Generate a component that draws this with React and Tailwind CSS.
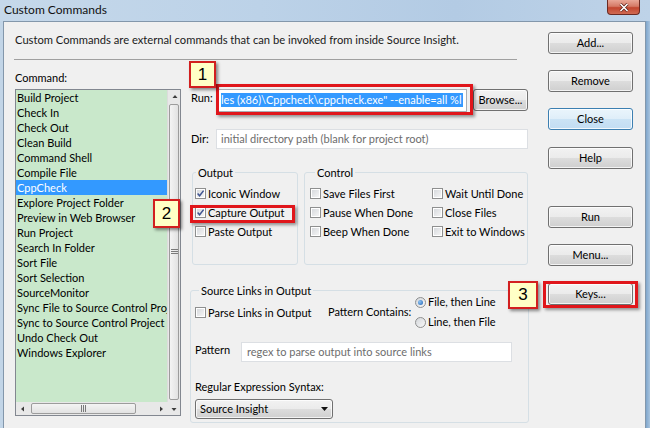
import React from "react";

const BTN =
  "flex items-center justify-center w-[85px] h-[22px] rounded-[3px] border border-[#707070] bg-[linear-gradient(#f2f2f2,#ebebeb_50%,#dddddd_50%,#cfcfcf)] shadow-[inset_0_0_0_1px_rgba(255,255,255,0.75)] text-[11px] text-black";
const BTN_FOCUS =
  "flex items-center justify-center w-[85px] h-[22px] rounded-[3px] border border-[#3c7fb1] bg-[linear-gradient(#eaf5fc,#dfeef9_50%,#cbe3f5_50%,#c2ddf3)] shadow-[inset_0_0_0_1px_rgba(255,255,255,0.8)] text-[11px] text-black";

function Check({ checked }) {
  return (
    <span className="flex items-center justify-center w-[11px] h-[11px] shrink-0 border border-[#8e8f8f] bg-[linear-gradient(135deg,#d3d6da,#f8f8f8)] shadow-[inset_0_0_0_1px_#ffffff]">
      {checked && (
        <svg width="9" height="9" viewBox="0 0 9 9">
          <path d="M1.6 4.6 L3.6 6.8 L7.6 1.6" fill="none" stroke="#3f5490" strokeWidth="1.5" />
        </svg>
      )}
    </span>
  );
}

function CheckRow({ label, checked }) {
  return (
    <div className="flex items-center gap-[2px] h-[19px] whitespace-nowrap">
      <Check checked={checked} />
      <span className="leading-[15px]">{label}</span>
    </div>
  );
}

function Radio({ on }) {
  return (
    <span className="flex items-center justify-center w-[11px] h-[11px] shrink-0 rounded-full border border-[#8e8f8f] bg-[linear-gradient(135deg,#d3d6da,#f8f8f8)]">
      {on && <span className="w-[5px] h-[5px] rounded-full bg-[radial-gradient(circle_at_35%_35%,#8fc4f2,#1f62b4)]" />}
    </span>
  );
}

const ITEMS = [
  "Build Project",
  "Check In",
  "Check Out",
  "Clean Build",
  "Command Shell",
  "Compile File",
  "CppCheck",
  "Explore Project Folder",
  "Preview in Web Browser",
  "Run Project",
  "Search In Folder",
  "Sort File",
  "Sort Selection",
  "SourceMonitor",
  "Sync File to Source Control Project",
  "Sync to Source Control Project",
  "Undo Check Out",
  "Windows Explorer",
];

function Arrow({ dir }) {
  const paths = {
    up: "M1.5 5 L4 2 L6.5 5 Z",
    down: "M1.5 3 L4 6 L6.5 3 Z",
    left: "M5 1.5 L2 4 L5 6.5 Z",
    right: "M3 1.5 L6 4 L3 6.5 Z",
  };
  return (
    <span className="flex items-center justify-center w-[13px] h-[13px] shrink-0">
      <svg width="8" height="8" viewBox="0 0 8 8">
        <path d={paths[dir]} fill="#3c3c3c" />
      </svg>
    </span>
  );
}

function ListBox() {
  return (
    <div className="mt-[4px] h-[327px] border border-[#828790] bg-[#c9e8cb] flex flex-col">
      <div className="flex flex-1 min-h-0">
        <div className="flex-1 min-w-0 overflow-hidden">
          {ITEMS.map((t) => (
            <div
              key={t}
              className={
                "h-[15px] leading-[15px] pl-[1px] whitespace-nowrap " +
                (t === "CppCheck" ? "bg-[#3399ff] text-white" : "text-black")
              }
            >
              {t}
            </div>
          ))}
        </div>
        <div className="w-[13px] flex flex-col bg-[#e8e8e8] border-l border-[#dcdcdc]">
          <Arrow dir="up" />
          <div className="flex-1 mx-[1px] mt-[1px] mb-[2px] rounded-[2px] border border-[#9c9c9c] bg-[linear-gradient(90deg,#f4f4f4,#e2e2e2)] flex items-center justify-center">
            <svg width="7" height="6" viewBox="0 0 7 6">
              <path d="M0 0.5 H7 M0 2.5 H7 M0 4.5 H7" stroke="#7a7a7a" strokeWidth="1" />
            </svg>
          </div>
        </div>
      </div>
      <div className="h-[13px] flex bg-[#e8e8e8]">
        <Arrow dir="left" />
        <div className="flex-1 flex items-center">
          <div className="ml-[2px] w-[105px] h-[11px] rounded-[2px] border border-[#9c9c9c] bg-[linear-gradient(#f4f4f4,#e2e2e2)] flex items-center justify-center">
            <svg width="6" height="7" viewBox="0 0 6 7">
              <path d="M0.5 0 V7 M2.5 0 V7 M4.5 0 V7" stroke="#7a7a7a" strokeWidth="1" />
            </svg>
          </div>
        </div>
        <Arrow dir="right" />
        <Arrow dir="down" />
      </div>
    </div>
  );
}

function Badge({ n, cls }) {
  return (
    <div
      className={
        "absolute flex items-center justify-center bg-[#ffffc6] border-2 border-[#d21f1f] shadow-[2px_2px_3px_rgba(0,0,0,0.45)] text-[17px] text-black font-['Liberation_Sans',Arial,sans-serif] " +
        cls
      }
    >
      {n}
    </div>
  );
}

function RedBox({ cls }) {
  return (
    <div
      className={
        "absolute border-[3px] border-[#e0161b] shadow-[2px_2px_3px_rgba(0,0,0,0.4)] " + cls
      }
    />
  );
}

export default function App() {
  return (
    <div className="relative w-[650px] h-[428px] overflow-hidden bg-[#b7cde3] font-['Lato','Liberation_Sans',sans-serif] text-[11px] text-black">
      {/* title bar */}
      <div className="flex h-[21px] items-start bg-[linear-gradient(90deg,#c5d8ea,#bcd2e8_40%,#b3cbe4_70%,#bed3e8)]">
        <span className="pl-[4px] pt-[2px] text-[12px] leading-[16px] text-[#111]">Custom Commands</span>
        <div className="ml-auto mr-[10px] w-[33px] h-[15px] rounded-b-[4px] border border-t-0 border-[#6b2a22] bg-[linear-gradient(#e9a797,#d57a66_45%,#c2462f_55%,#d06a52)] flex items-center justify-center">
          <svg width="10" height="9" viewBox="0 0 10 9">
            <path d="M1.5 1 L8.5 8 M8.5 1 L1.5 8" stroke="#5a1f18" strokeWidth="3" />
            <path d="M1.5 1 L8.5 8 M8.5 1 L1.5 8" stroke="#ffffff" strokeWidth="1.6" />
          </svg>
        </div>
      </div>

      {/* body */}
      <div className="flex h-[407px]">
        <div className="w-[3px] bg-[#c2d5e7]" />
        <div className="w-[643px] border-l border-t border-r border-[#8397ab] bg-[#f0f0f0] flex">
          {/* main column */}
          <div className="w-[526px] flex flex-col">
            <p className="mt-[10px] ml-[11px] h-[15px] leading-[15px] whitespace-nowrap text-[#1a1a1a] text-[11.2px]">
              Custom Commands are external commands that can be invoked from inside Source Insight.
            </p>
            <div className="mt-[12px] ml-[10px] w-[503px] h-px bg-[#a0a0a0]" />
            <div className="flex">
              <div className="ml-[11px] w-[166px]">
                <div className="mt-[10px] h-[15px] leading-[15px]">Command:</div>
                <ListBox />
              </div>

              <div className="ml-[9px] w-[339px] flex flex-col">
                {/* Run row */}
                <div className="mt-[28px] h-[24px] flex items-center">
                  <span className="w-[28px] pl-[1px] mb-[4px]">Run:</span>
                  <div className="w-[249px] h-[23px] border border-[#abadb3] bg-white flex items-center px-[2px]">
                    <span className="w-[242px] h-[14px] leading-[14px] overflow-hidden whitespace-nowrap bg-[#3399ff] text-white">
                      {'les (x86)\\Cppcheck\\cppcheck.exe" --enable=all %l'}
                    </span>
                  </div>
                  <div className={BTN + " ml-[6px] !w-[55px]"}>Browse...</div>
                </div>
                {/* Dir row */}
                <div className="mt-[17px] h-[20px] flex items-center">
                  <span className="w-[26px] pl-[1px]">Dir:</span>
                  <div className="w-[312px] h-[20px] border border-[#dcdfe3] bg-white flex items-center pl-[4px] text-[#6d6d6d] whitespace-nowrap">
                    initial directory path (blank for project root)
                  </div>
                </div>
                {/* groups */}
                <div className="mt-[16px] flex">
                  <fieldset className="ml-[2px] w-[106px] h-[100px] border border-[#d5dfe5] rounded-[3px] pl-[2px] pt-[4px]">
                    <legend className="ml-[1px] px-[2px] leading-[15px]">Output</legend>
                    <CheckRow label="Iconic Window" checked />
                    <CheckRow label="Capture Output" checked />
                    <CheckRow label="Paste Output" />
                  </fieldset>
                  <fieldset className="ml-[6px] w-[224px] h-[100px] border border-[#d5dfe5] rounded-[3px] pl-[5px] pt-[4px]">
                    <legend className="ml-[5px] px-[2px] leading-[15px]">Control</legend>
                    <div className="grid grid-cols-[122px_auto]">
                      <CheckRow label="Save Files First" />
                      <CheckRow label="Wait Until Done" />
                      <CheckRow label="Pause When Done" />
                      <CheckRow label="Close Files" />
                      <CheckRow label="Beep When Done" />
                      <CheckRow label="Exit to Windows" />
                    </div>
                  </fieldset>
                </div>
                {/* source links */}
                <fieldset className="mt-[18px] w-[339px] h-[140px] border border-[#d5dfe5] rounded-[3px] pl-[4px]">
                  <legend className="ml-[4px] px-[2px] leading-[15px]">Source Links in Output</legend>
                  <div className="mt-[-5px] h-[38px] flex items-center">
                    <div className="w-[133px]">
                      <CheckRow label="Parse Links in Output" />
                    </div>
                    <span className="w-[87px] whitespace-nowrap">Pattern Contains:</span>
                    <div className="flex flex-col">
                      <div className="h-[20px] flex items-center gap-[2px]">
                        <Radio on />
                        <span>File, then Line</span>
                      </div>
                      <div className="h-[20px] flex items-center gap-[2px]">
                        <Radio />
                        <span>Line, then File</span>
                      </div>
                    </div>
                  </div>
                  <div className="mt-[11px] h-[20px] flex items-center">
                    <span className="w-[46px] mb-[4px]">Pattern</span>
                    <div className="w-[271px] h-[20px] border border-[#dcdfe3] bg-white flex items-center pl-[5px] text-[#6d6d6d] whitespace-nowrap">
                      regex to parse output into source links
                    </div>
                  </div>
                  <div className="mt-[17px] h-[15px] leading-[15px]">Regular Expression Syntax:</div>
                  <div className="mt-[5px] w-[138px] h-[20px] rounded-[3px] border border-[#707070] bg-[linear-gradient(#f2f2f2,#ebebeb_50%,#dddddd_50%,#cfcfcf)] shadow-[inset_0_0_0_1px_rgba(255,255,255,0.75)] flex items-center pl-[4px] pr-[4px]">
                    <span className="flex-1">Source Insight</span>
                    <svg width="7" height="4" viewBox="0 0 7 4">
                      <path d="M0 0 H7 L3.5 4 Z" fill="#111" />
                    </svg>
                  </div>
                </fieldset>
              </div>
            </div>
          </div>

          {/* right buttons */}
          <div className="ml-[18px] w-[85px] flex flex-col">
            <div className={BTN + " mt-[10px]"}>Add...</div>
            <div className={BTN + " mt-[16px]"}>Remove</div>
            <div className={BTN_FOCUS + " mt-[16px]"}>Close</div>
            <div className={BTN + " mt-[17px]"}>Help</div>
            <div className={BTN + " mt-[37px]"}>Run</div>
            <div className={BTN + " mt-[16px]"}>Menu...</div>
            <div className={BTN + " mt-[17px]"}>Keys...</div>
          </div>
        </div>
        <div className="flex-1 bg-[linear-gradient(90deg,#7fa6cc,#a9c4de)]" />
      </div>

      {/* annotations */}
      <RedBox cls="left-[216px] top-[84px] w-[257px] h-[31px]" />
      <RedBox cls="left-[190px] top-[205px] w-[105px] h-[18px]" />
      <RedBox cls="left-[543px] top-[281px] w-[95px] h-[27px]" />
      <Badge n="1" cls="left-[189px] top-[61px] w-[27px] h-[27px]" />
      <Badge n="2" cls="left-[153px] top-[199px] w-[27px] h-[29px]" />
      <Badge n="3" cls="left-[508px] top-[281px] w-[30px] h-[28px]" />
    </div>
  );
}
